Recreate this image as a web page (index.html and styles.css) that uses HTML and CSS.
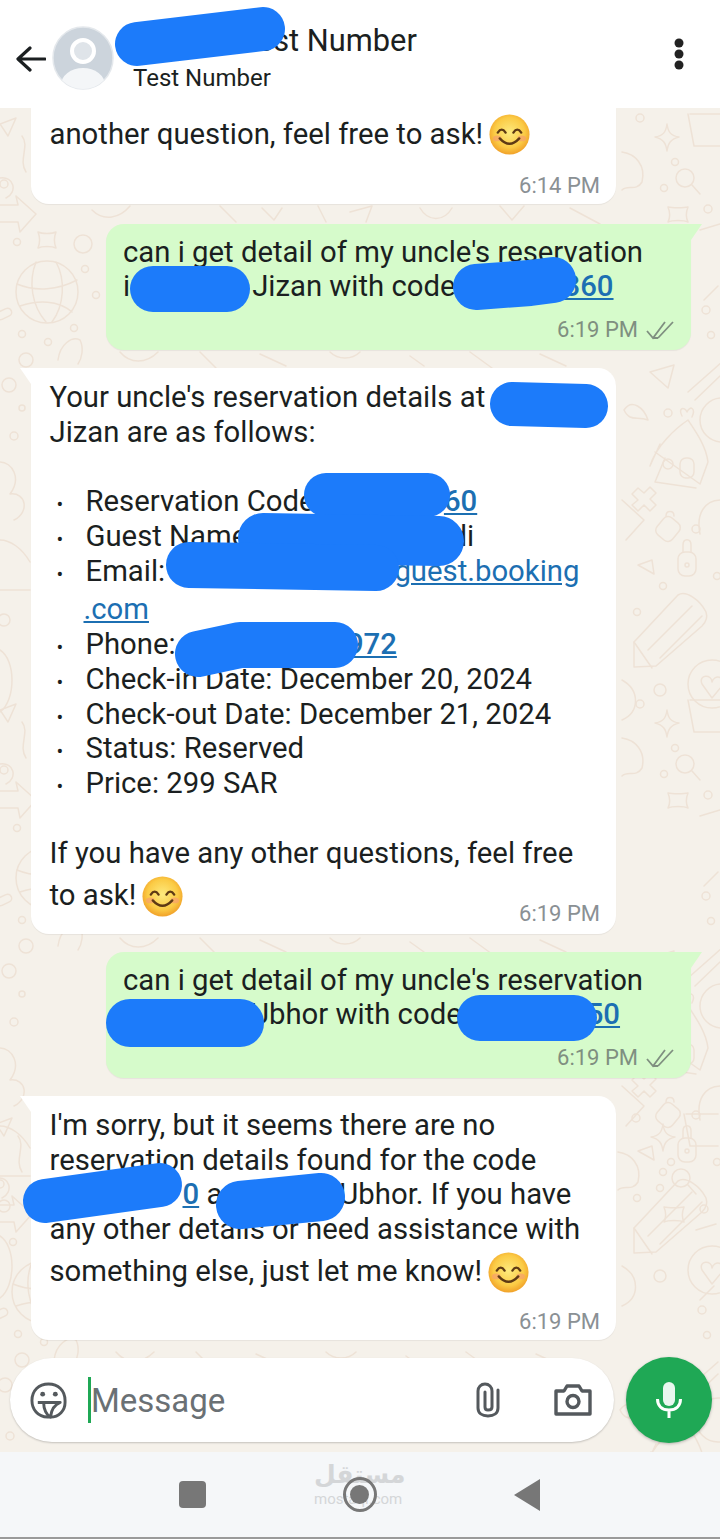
FILE: index.html
```html
<!DOCTYPE html>
<html lang="en">
<head>
    <meta charset="UTF-8">
    <meta name="viewport" content="width=device-width, initial-scale=1.0">
    <title>Test Number</title>
    <link rel="stylesheet" href="styles.css">
</head>
<body>
    <svg class="defs" width="0" height="0">
        <defs>
            <radialGradient id="smileFill" cx="50%" cy="45%" r="58%">
                <stop offset="0" stop-color="#fdea7e"/>
                <stop offset="0.65" stop-color="#fbcb45"/>
                <stop offset="1" stop-color="#ef9a24"/>
            </radialGradient>
            <symbol id="smile" viewBox="0 0 42 42">
                <circle cx="21" cy="21" r="20.5" fill="url(#smileFill)"/>
                <ellipse cx="8.5" cy="25" rx="4.5" ry="3" fill="#f6a06c" opacity=".7"/>
                <ellipse cx="33.5" cy="25" rx="4.5" ry="3" fill="#f6a06c" opacity=".7"/>
                <path d="M9 19 Q13 13 17 19 M25 19 Q29 13 33 19" fill="none" stroke="#5e3a14" stroke-width="2.4" stroke-linecap="round"/>
                <path d="M11 25 Q21 36 31 25" fill="none" stroke="#5e3a14" stroke-width="2.4" stroke-linecap="round"/>
            </symbol>
        </defs>
    </svg>

    <div class="page">
        <header class="topbar">
            <svg class="back-icon" viewBox="0 0 30 26"><path d="M29 13 H3 M14 2 L2 13 L14 24"/></svg>
            <svg class="avatar" viewBox="0 0 62 64">
                <defs><clipPath id="avatarClip"><ellipse cx="31" cy="32" rx="30" ry="31"/></clipPath></defs>
                <ellipse cx="31" cy="32" rx="30" ry="31" fill="#ccd4dc" stroke="#e4e8ec" stroke-width="1.5"/>
                <g clip-path="url(#avatarClip)">
                    <circle cx="31" cy="25" r="11" fill="#dfe4e9" stroke="#fff" stroke-width="4"/>
                    <ellipse cx="31" cy="59" rx="22" ry="17" fill="#f4f6f8"/>
                </g>
            </svg>
            <div class="contact">
                <div class="contact-name"><span class="gap-title"></span>Test Number</div>
                <div class="contact-sub">Test Number</div>
            </div>
            <svg class="menu-icon" viewBox="0 0 10 32"><circle cx="5" cy="5" r="4.5"/><circle cx="5" cy="16" r="4.5"/><circle cx="5" cy="27" r="4.5"/></svg>
        </header>

        <main class="chat">
            <!-- doodle wallpaper, only the margins and gaps show -->
            <svg class="wallpaper" width="720" height="1344" viewBox="0 108 720 1344">
                <g id="sideDoodles">
                    <!-- right side -->
                    <path d="M667 124 C668 132 671 136 679 137 C671 139 668 143 667 151 C666 143 663 139 655 137 C663 136 666 132 667 124 Z"/>
                    <circle cx="640" cy="118" r="4"/>
                    <path d="M690 114 H722 M688 114 L694 146 H722"/>
                    <circle cx="685" cy="178" r="9"/>
                    <path d="M692 185 L700 194"/>
                    <path d="M622 152 C636 154 646 166 642 182 C636 192 628 184 622 190"/>
                    <circle cx="675" cy="162" r="3.5"/>
                    <circle cx="664" cy="188" r="3.5"/>
                    <circle cx="708" cy="209" r="4"/>
                    <path d="M668 207 C672 208 684 208 688 207 C686 212 686 218 688 222 C684 220 672 220 668 222 C670 218 670 212 668 207 Z"/>
                    <path d="M700 230 L720 224 M704 300 L718 286"/>
                    <circle cx="706" cy="310" r="4"/>
                    <circle cx="711" cy="335" r="3.5"/>
                    <path d="M650 372 L674 365 L668 388 Z"/>
                    <path d="M688 392 L722 362 M695 400 L722 374"/>
                    <circle cx="722" cy="420" r="22"/>
                    <circle cx="668" cy="413" r="4"/>
                    <path d="M624 410 C632 398 644 408 648 420 C636 416 630 422 624 410 Z"/>
                    <path d="M650 466 C656 446 676 428 688 420 C696 432 706 446 708 462 M650 466 L660 444 M655 452 L700 484 L708 462 M665 458 L655 482 L696 488"/>
                    <path d="M682 416 C678 408 684 406 687 412 C690 405 696 408 692 417"/>
                    <circle cx="668" cy="464" r="5"/>
                    <rect x="680" y="458" width="14" height="20" rx="6"/>
                    <path d="M632 494 L638 488 L644 493 L650 487 L656 493 L650 499 L656 505 L650 511 L644 505 L638 511 L632 505 L638 500 Z"/>
                    <path d="M622 500 L644 520 L626 540"/>
                    <rect x="658" y="518" width="20" height="22" rx="6" transform="rotate(40 668 529)"/>
                    <path d="M666 516 C666 510 674 510 674 516"/>
                    <circle cx="696" cy="529" r="4"/>
                    <path d="M722 500 C704 500 696 514 700 534"/>
                    <path d="M638 565 L652 560 L654 574 Z"/>
                    <rect x="678" y="552" width="18" height="24" rx="7"/>
                    <path d="M683 552 V545 C683 538 691 538 691 545 V552"/>
                    <circle cx="687" cy="565" r="2"/>
                    <circle cx="663" cy="586" r="3.5"/>
                    <circle cx="637" cy="612" r="3.5"/>
                    <circle cx="717" cy="576" r="3.5"/>
                    <path d="M634 642 L678 595 C686 590 700 600 706 612 C708 618 706 622 702 626 L656 666 L634 667 Z"/>
                    <path d="M648 650 L692 606 M660 658 L702 616 M634 642 L652 668"/>
                    <path d="M622 680 C640 690 640 712 622 720"/>
                    <circle cx="660" cy="690" r="6"/>
                    <circle cx="712" cy="684" r="24"/>
                    <path d="M702 684 C698 674 712 674 712 682 C714 674 726 676 722 686 L712 698 Z"/>
                    <!-- left side -->
                    <circle cx="47" cy="292" r="31"/>
                    <path d="M17 284 C36 292 58 290 77 280 M20 306 C38 300 58 300 72 312 M36 262 C28 282 32 306 46 322 M56 262 C66 280 64 306 52 322"/>
                    <circle cx="83" cy="244" r="9"/>
                    <path d="M38 232 C42 234 52 234 56 232 C54 237 54 243 56 248 C52 246 42 246 38 248 C40 243 40 237 38 232 Z"/>
                    <path d="M0 205 H18 L16 196 L36 214 L20 232 L18 222 H0"/>
                    <circle cx="17" cy="242" r="3.5"/>
                    <circle cx="22" cy="334" r="3.5"/>
                    <circle cx="48" cy="342" r="3.5"/>
                    <circle cx="74" cy="328" r="3.5"/>
                    <circle cx="96" cy="295" r="3.5"/>
                    <circle cx="85" cy="269" r="3.5"/>
                    <rect x="-4" y="310" width="16" height="8" rx="4" transform="rotate(-25 4 314)"/>
                    <path d="M58 360 C60 344 72 336 80 340 C84 348 82 358 78 364"/>
                    <circle cx="26" cy="360" r="7"/>
                    <path d="M0 124 L16 118 L8 136 Z M22 136 C30 146 18 160 26 172 M0 178 C14 176 18 192 6 198"/>
                    <circle cx="4" cy="184" r="4"/>
                    <circle cx="9" cy="385" r="7"/>
                    <circle cx="22" cy="408" r="3"/>
                    <circle cx="14" cy="436" r="4"/>
                    <path d="M0 462 C12 462 22 478 10 494 C26 492 30 512 14 520 M0 540 C10 540 22 548 30 562"/>
                    <path d="M0 590 H30"/>
                    <circle cx="4" cy="620" r="6"/>
                    <path d="M0 650 C16 660 16 700 0 712"/>
                    <!-- gaps between bubbles -->
                    <path d="M130 206 C120 218 104 222 92 210 M220 206 L236 222 M262 208 L274 220 L282 208 M318 206 L326 222 M350 212 L372 206 L366 222 M420 208 C428 222 444 222 452 208 M500 206 L512 220 L524 206 M570 208 L600 224"/>
                    <path d="M120 352 C130 364 146 364 158 352 M200 352 L216 368 M260 354 L286 366 M330 352 C338 360 352 360 360 352 M410 356 L424 366 M470 352 L492 368 M540 354 L566 366"/>
                </g>
                <use href="#sideDoodles" transform="translate(0 586)"/>
                <use href="#sideDoodles" transform="translate(-4 1000)"/>
            </svg>

            <div class="messages">
                <div class="bubble in first">
                    <p class="text">another question, feel free to ask!<svg class="emoji"><use href="#smile"/></svg></p>
                    <div class="time">6:14 PM</div>
                </div>

                <div class="bubble out">
                    <p class="text">can i get detail of my uncle's reservation<br>i<span class="gap-a"></span>Jizan with code<a class="link num" href="#"><span class="gap-b"></span>360</a></p>
                    <div class="time tight">6:19 PM<svg class="ticks" viewBox="0 0 30 20"><path d="M2 11 L8 18 L20 2 M13 18 L28 2 M8 18 H13"/></svg></div>
                </div>

                <div class="bubble in">
                    <p class="text">Your uncle's reservation details at<br>Jizan are as follows:</p>
                    <ul class="details">
                        <li>Reservation Code: <a class="link num" href="#"><span class="gap-c"></span>60</a></li>
                        <li>Guest Name: <span class="gap-d"></span>di</li>
                        <li>Email: <a class="link" href="#"><span class="gap-e"></span>guest.booking<span class="wrapped">.com</span></a></li>
                        <li>Phone: <a class="link num" href="#"><span class="gap-f"></span>972</a></li>
                        <li>Check-in Date: December 20, 2024</li>
                        <li>Check-out Date: December 21, 2024</li>
                        <li>Status: Reserved</li>
                        <li>Price: 299 SAR</li>
                    </ul>
                    <p class="text">If you have any other questions, feel free<span class="emoji-line">to ask!<svg class="emoji"><use href="#smile"/></svg></span></p>
                    <div class="time overlap">6:19 PM</div>
                </div>

                <div class="bubble out">
                    <p class="text">can i get detail of my uncle's reservation<br><span class="gap-g"></span>Ubhor with code<a class="link num" href="#"><span class="gap-h"></span>50</a></p>
                    <div class="time tight">6:19 PM<svg class="ticks" viewBox="0 0 30 20"><path d="M2 11 L8 18 L20 2 M13 18 L28 2 M8 18 H13"/></svg></div>
                </div>

                <div class="bubble in">
                    <p class="text">I'm sorry, but it seems there are no<br>reservation details found for the code<br><a class="link num" href="#"><span class="gap-i"></span>0</a> a<span class="gap-j"></span>Ubhor. If you have<br>any other details or need assistance with<span class="emoji-line">something else, just let me know!<svg class="emoji"><use href="#smile"/></svg></span></p>
                    <div class="time">6:19 PM</div>
                </div>
            </div>

            <div class="composer">
                <div class="input-pill">
                    <svg class="sticker-icon" viewBox="0 0 38 38">
                        <path d="M21 36 H18 C8 36 2 28 2 19 C2 9 9 2 19 2 C29 2 36 9 36 19 V21 C36 29 30 36 21 36 Z"/>
                        <path d="M8 21 H31 C26 23 22 28 21 36 C17 34 14 28 14 21"/>
                        <circle class="dot" cx="13" cy="12.5" r="2.5"/>
                        <circle class="dot" cx="26" cy="12.5" r="2.5"/>
                    </svg>
                    <span class="caret"></span>
                    <span class="placeholder">Message</span>
                    <svg class="clip-icon" viewBox="0 0 24 36">
                        <path d="M22 8 V26 C22 31 18 34 12 34 C6 34 2 31 2 26 V9 C2 5 5 2 9 2 C13 2 16 5 16 9 V25 C16 27 14 28 12 28 C10 28 9 27 9 25 V10"/>
                    </svg>
                    <svg class="camera-icon" viewBox="0 0 38 34">
                        <path d="M2 8 H10 L13 3 H25 L28 8 H36 V31 H2 Z"/>
                        <circle cx="19" cy="18.5" r="6"/>
                    </svg>
                </div>
                <button class="mic-button">
                    <svg class="mic-icon" viewBox="0 0 26 36">
                        <rect class="solid" x="7" y="0" width="12" height="24" rx="6"/>
                        <path d="M1.5 17 C1.5 24 6 28 13 28 C20 28 24.5 24 24.5 17 M13 28 V36"/>
                    </svg>
                </button>
            </div>
        </main>

        <nav class="navbar">
            <div class="watermark">
                <span class="watermark-ar">مستقل</span>
                <span class="watermark-en">mostaql.com</span>
            </div>
            <span class="nav-square"></span>
            <span class="nav-home"></span>
            <span class="nav-back"></span>
        </nav>

        <!-- blue scribbles drawn over the private bits -->
        <svg class="scribbles" width="720" height="1539" viewBox="0 0 720 1539">
            <path stroke-width="44" d="M137 44 L263 29"/>
            <path stroke-width="46" d="M153 289 L227 289"/>
            <path stroke-width="46" d="M476 287 L530 283 L553 280"/>
            <path stroke-width="44" d="M512 404 L586 406"/>
            <path stroke-width="44" d="M326 495 L428 495"/>
            <path stroke-width="50" d="M263 538 L439 541"/>
            <path stroke-width="46" d="M189 565 L376 568"/>
            <path stroke-width="46" d="M198 654 L240 645 L335 645"/>
            <path stroke-width="48" d="M130 1023 L240 1023"/>
            <path stroke-width="46" d="M480 1018 L574 1018"/>
            <path stroke-width="44" d="M45 1201 L160 1185"/>
            <path stroke-width="48" d="M240 1205 L321 1197"/>
        </svg>
    </div>
</body>
</html>
```

FILE: styles.css
```css
body {
    margin: 0;
    font-family: Roboto, "Noto Sans", sans-serif;
    color: #1b1f21;
}
p {
    margin: 0;
}
.defs {
    position: absolute;
}
.page {
    position: relative;
    width: 720px;
    height: 1539px;
    overflow: hidden;
    display: flex;
    flex-direction: column;
}

/* header */
.topbar {
    height: 108px;
    display: flex;
    align-items: center;
    background-color: #fff;
    position: relative;
    z-index: 2;
}
.back-icon {
    width: 30px;
    height: 26px;
    margin-left: 16px;
    margin-top: 9px;
    fill: none;
    stroke: #1b1f21;
    stroke-width: 3.2;
    stroke-linecap: round;
    stroke-linejoin: round;
}
.avatar {
    width: 62px;
    height: 64px;
    margin-left: 6px;
    margin-top: 8px;
}
.contact {
    margin-left: 19px;
    margin-top: 8px;
    flex: 1;
}
.contact-name {
    font-size: 30.8px;
    line-height: 36px;
    white-space: nowrap;
}
.gap-title {
    display: inline-block;
    width: 107px;
}
.contact-sub {
    font-size: 24px;
    line-height: 30px;
    margin-top: 4px;
}
.menu-icon {
    width: 10px;
    height: 32px;
    margin-right: 36px;
    fill: #222;
}

/* chat area */
.chat {
    flex: 1;
    position: relative;
    background-color: #f5f1ea;
    display: flex;
    flex-direction: column;
}
.wallpaper {
    position: absolute;
    top: 0;
    left: 0;
    fill: none;
    stroke: #eee2d6;
    stroke-width: 1.5;
    stroke-linecap: round;
    stroke-linejoin: round;
}
.messages {
    position: relative;
    display: flex;
    flex-direction: column;
    gap: 18px;
}
.bubble {
    position: relative;
    width: 585px;
    box-sizing: border-box;
    padding: 11.5px 16px 6px 18.5px;
    border-radius: 18px;
    background-color: #fff;
    box-shadow: 0 1px 1px rgba(0, 0, 0, 0.06);
}
.bubble.in {
    margin-left: 31px;
    border-top-left-radius: 0;
}
.bubble.in::before {
    content: "";
    position: absolute;
    top: 0;
    left: -11px;
    border-top: 16px solid #fff;
    border-left: 11px solid transparent;
}
.bubble.first {
    padding-top: 8.5px;
    margin-bottom: 2px;
    border-radius: 0 0 18px 18px;
}
.bubble.first::before {
    display: none;
}
.bubble.first .time {
    margin-top: 21.3px;
}
.bubble.out {
    margin-left: 106px;
    padding-top: 11px;
    padding-left: 17px;
    padding-bottom: 8px;
    background-color: #d6fbcb;
    border-top-right-radius: 0;
}
.bubble.out::before {
    content: "";
    position: absolute;
    top: 0;
    right: -11px;
    border-top: 16px solid #d6fbcb;
    border-right: 11px solid transparent;
}
.text {
    font-size: 29.3px;
    line-height: 34.7px;
    white-space: nowrap;
}
.emoji {
    width: 41px;
    height: 41px;
    margin: -9px 0 -7px 6px;
    vertical-align: middle;
}
.emoji-line {
    display: block;
    margin-top: 7.5px;
}
.time {
    margin-top: 20px;
    height: 25px;
    line-height: 26px;
    text-align: right;
    font-size: 22px;
    color: #8a9094;
    white-space: nowrap;
}
.time.tight {
    margin-top: 13.5px;
    color: #7f8f80;
}
.time.overlap {
    margin-top: -12px;
    margin-bottom: 2px;
}
.ticks {
    width: 30px;
    height: 20px;
    margin-left: 7px;
    vertical-align: -3px;
    fill: none;
    stroke: #7f8f80;
    stroke-width: 1.8;
}
.link {
    color: #1c6fb2;
}
.link.num {
    font-weight: 500;
}

/* the widths below only hold the room under the scribbles */
.gap-a { display: inline-block; width: 122px; }
.gap-b { display: inline-block; width: 108px; }
.gap-c { display: inline-block; width: 115px; }
.gap-d { display: inline-block; width: 189px; }
.gap-e { display: inline-block; width: 222px; }
.gap-f { display: inline-block; width: 164px; }
.gap-g { display: inline-block; width: 127px; }
.gap-h { display: inline-block; width: 125px; }
.gap-i { display: inline-block; width: 133px; }
.gap-j { display: inline-block; width: 117px; }

.details {
    list-style: none;
    margin: 35px 0;
    padding: 0;
    font-size: 29.3px;
    line-height: 34.7px;
    white-space: nowrap;
}
.details li {
    padding-left: 36px;
    text-indent: -36px;
}
.details li::before {
    content: "\2022";
    display: inline-block;
    width: 29px;
    padding-left: 7px;
    text-indent: 0;
    font-size: 20px;
    line-height: 20px;
}
.wrapped {
    display: block;
    margin-top: 4px;
    margin-left: -2px;
    text-indent: 0;
}

/* message box */
.composer {
    position: relative;
    display: flex;
    align-items: center;
    gap: 12px;
    margin-top: auto;
    padding: 0 8px 9px 10px;
}
.input-pill {
    flex: 1;
    height: 84px;
    display: flex;
    align-items: center;
    border-radius: 42px;
    background-color: #fff;
    box-shadow: 0 1px 2px rgba(0, 0, 0, 0.2);
}
.sticker-icon {
    width: 37px;
    height: 37px;
    margin-left: 20px;
    fill: none;
    stroke: #54595d;
    stroke-width: 3;
    stroke-linejoin: round;
}
.sticker-icon .dot {
    fill: #54595d;
    stroke: none;
}
.caret {
    width: 3px;
    height: 46px;
    margin-left: 21px;
    background-color: #1fa855;
}
.placeholder {
    flex: 1;
    font-size: 33px;
    color: #6a7074;
}
.clip-icon {
    width: 24px;
    height: 36px;
    fill: none;
    stroke: #54595d;
    stroke-width: 3;
    stroke-linecap: round;
}
.camera-icon {
    width: 38px;
    height: 34px;
    margin-left: 54px;
    margin-right: 22px;
    fill: none;
    stroke: #54595d;
    stroke-width: 3.4;
    stroke-linejoin: round;
}
.mic-button {
    width: 86px;
    height: 86px;
    padding: 0;
    border: none;
    border-radius: 50%;
    background-color: #1fa855;
    display: flex;
    align-items: center;
    justify-content: center;
    box-shadow: 0 1px 3px rgba(0, 0, 0, 0.25);
}
.mic-icon {
    width: 26px;
    height: 36px;
    fill: none;
    stroke: #fff;
    stroke-width: 3;
}
.mic-icon .solid {
    fill: #e9f7ef;
    stroke: none;
}

/* android buttons */
.navbar {
    position: relative;
    height: 87px;
    box-sizing: border-box;
    padding-right: 2px;
    display: flex;
    align-items: center;
    justify-content: center;
    gap: 137px;
    background-color: #f5f7f9;
    border-bottom: 2px solid #9a9a9a;
}
.nav-square {
    width: 27px;
    height: 27px;
    border-radius: 4px;
    background-color: #777;
}
.nav-home {
    position: relative;
    width: 34px;
    height: 35px;
    box-sizing: border-box;
    border: 3px solid #777;
    border-radius: 50%;
    display: flex;
    align-items: center;
    justify-content: center;
}
.nav-home::after {
    content: "";
    width: 19px;
    height: 19px;
    border-radius: 50%;
    background-color: #777;
}
.nav-back {
    width: 0;
    height: 0;
    border-top: 16px solid transparent;
    border-bottom: 16px solid transparent;
    border-right: 26px solid #777;
}
.watermark {
    position: absolute;
    left: 314px;
    top: 8px;
    width: 88px;
    text-align: center;
    color: #d4d6d8;
    white-space: nowrap;
}
.watermark-ar {
    display: block;
    font-family: "DejaVu Sans", sans-serif;
    font-weight: bold;
    font-size: 25px;
    line-height: 30px;
}
.watermark-en {
    display: block;
    font-size: 15px;
    line-height: 18px;
}

.scribbles {
    position: absolute;
    top: 0;
    left: 0;
    z-index: 3;
    fill: none;
    stroke: #1c7bfa;
    stroke-linecap: round;
    stroke-linejoin: round;
}
```
